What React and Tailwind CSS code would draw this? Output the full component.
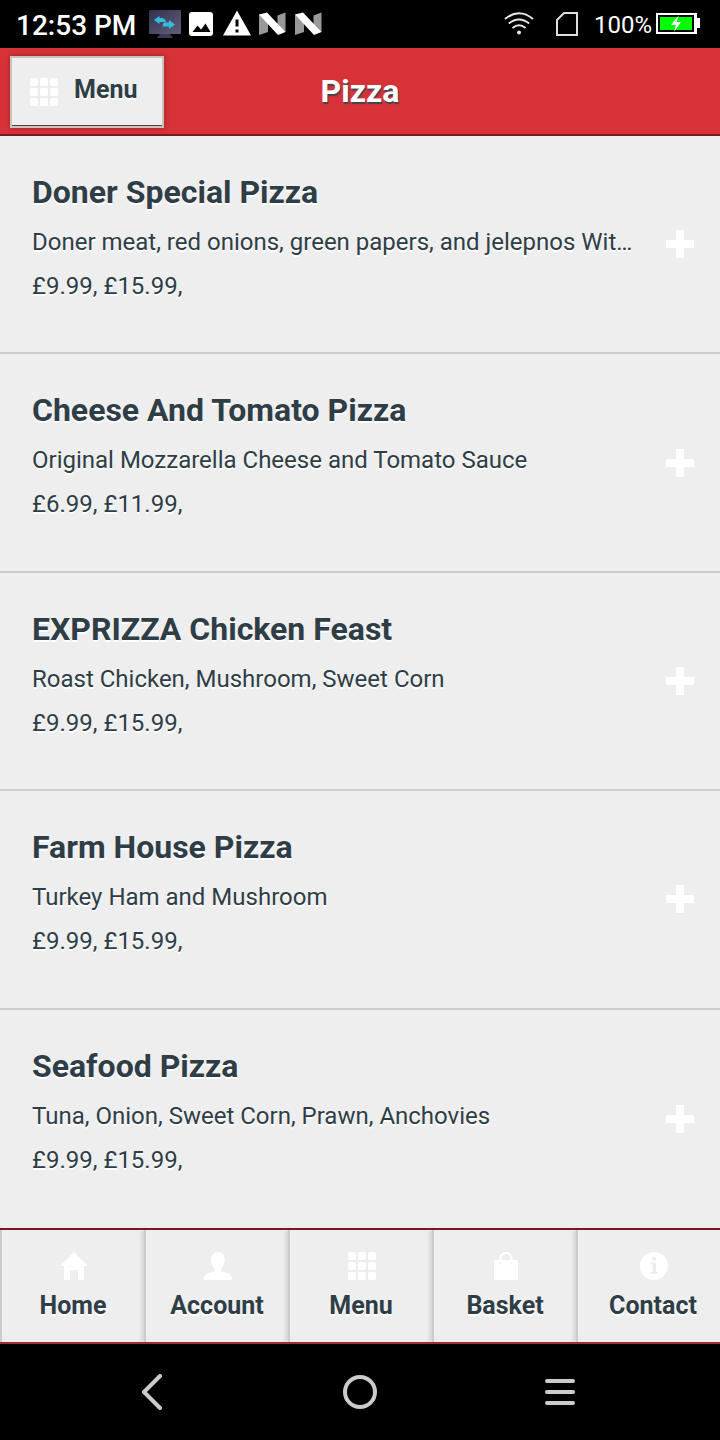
import React from "react";

const pizzas = [
  {
    name: "Doner Special Pizza",
    toppings: "Doner meat, red onions, green papers, and jelepnos With cheese",
    prices: "£9.99, £15.99,",
  },
  {
    name: "Cheese And Tomato Pizza",
    toppings: "Original Mozzarella Cheese and Tomato Sauce",
    prices: "£6.99, £11.99,",
  },
  {
    name: "EXPRIZZA Chicken Feast",
    toppings: "Roast Chicken, Mushroom, Sweet Corn",
    prices: "£9.99, £15.99,",
  },
  {
    name: "Farm House Pizza",
    toppings: "Turkey Ham and Mushroom",
    prices: "£9.99, £15.99,",
  },
  {
    name: "Seafood Pizza",
    toppings: "Tuna, Onion, Sweet Corn, Prawn, Anchovies",
    prices: "£9.99, £15.99,",
  },
];

function Icon({ children }) {
  return (
    <svg aria-hidden="true" viewBox="0 0 28 28" className="size-7 shrink-0 fill-white">
      {children}
    </svg>
  );
}

function GridIcon() {
  return (
    <Icon>
      {[0, 10, 20].map((y) =>
        [0, 10, 20].map((x) => (
          <rect key={`${x}-${y}`} x={x} y={y} width="8" height="8" rx="1.6" />
        ))
      )}
    </Icon>
  );
}

function HomeIcon() {
  return (
    <Icon>
      <path d="M14 0 28 14H24V28H18V18H10V28H4V14H0Z" />
    </Icon>
  );
}

function UserIcon() {
  return (
    <Icon>
      <path d="M14 0C18.200 0 20.800 3.200 20.800 8C20.800 12.200 19 15.500 17 17.200V19.500C21 20.500 28 21 28 26.500V28H0V26.500C0 21 7 20.500 11 19.500V17.200C9 15.500 7.200 12.200 7.200 8C7.200 3.200 9.800 0 14 0Z" />
    </Icon>
  );
}

function BagIcon() {
  return (
    <Icon>
      <path d="M8.500 9V6.500A5.500 5.500 0 0 1 19.500 6.500V9" fill="none" stroke="#fff" strokeWidth="2" />
      <path fillRule="evenodd" d="M2 8H26V28H2ZM8.500 10A1 1 0 1 0 8.500 12A1 1 0 1 0 8.500 10ZM19.500 10A1 1 0 1 0 19.500 12A1 1 0 1 0 19.500 10Z" />
    </Icon>
  );
}

function InfoIcon() {
  return (
    <Icon>
      <circle cx="14" cy="14" r="14" />
      <path fill="#eee" d="M12.200 5H16V8.400H12.200ZM10.500 10.500H16V20H18V22H10.500V20H12.500V12.500H10.500Z" />
    </Icon>
  );
}

function PlusIcon() {
  return (
    <Icon>
      <path d="M10 0H18V10H28V18H18V28H10V18H0V10H10Z" />
    </Icon>
  );
}

function NougatIcon() {
  return (
    <svg aria-hidden="true" viewBox="0 0 28 24" className="h-6 w-7">
      <path d="M0 2.500 9 9V20L0 23ZM18.500 3.500 26.500 0.500V20L18.500 16Z" fill="#999" />
      <path d="M0 2.500 8 0.500 26.500 20 19 23Z" fill="#fff" />
    </svg>
  );
}

function StatusBar() {
  return (
    <div className="flex h-12 items-center bg-black pl-4 pr-5 text-white">
      <span className="pt-1 text-[28px] leading-8 font-medium">12:53 PM</span>
      <div className="ml-[13px] flex items-center gap-2">
        <svg aria-hidden="true" viewBox="0 0 32 28" className="h-7 w-8">
          <defs>
            <linearGradient id="screen" x1="0" y1="0" x2="1" y2="1">
              <stop offset="0" stopColor="#31314d" />
              <stop offset="1" stopColor="#60607c" />
            </linearGradient>
          </defs>
          <rect width="32" height="24" rx="1" fill="url(#screen)" />
          <path d="M11 24H21L24 28H8Z" fill="#3b3b50" />
          <path
            d="M5 10 10.500 6V8H13Q16 8 17 12H14Q13 12 10.500 12V14Z M26 14.500 20 10V12.500H15Q14 13 13.500 16.500H17L20 16.500V19Z"
            fill="#35bde0"
          />
        </svg>
        <svg aria-hidden="true" viewBox="0 0 24 24" className="size-6">
          <rect width="24" height="24" rx="3" fill="#fff" />
          <path d="M3.500 20 8.500 13.500 12 17.500 16.500 11.500 21.500 20Z" fill="#000" />
        </svg>
        <svg aria-hidden="true" viewBox="0 0 32 28" className="h-7 w-8">
          <path d="M16 0.500 30 25.500H2Z" fill="#fff" />
          <path d="M14.500 9.500H17.500V16.500H14.500ZM14.500 19.500H17.500V22.500H14.500Z" fill="#000" />
        </svg>
        <div className="-ml-0.5 flex gap-2">
          <NougatIcon />
          <NougatIcon />
        </div>
      </div>
      <div className="ml-auto flex items-center">
        <svg aria-hidden="true" viewBox="0 0 30 24" className="h-6 w-[30px]" fill="none" stroke="#e6e6e6" strokeWidth="2">
          <path d="M1 7Q15-4.500 29 7M4.800 11.500Q15 3.500 25.200 11.500M8.500 16Q15 10.500 21.500 16" />
          <circle cx="15" cy="20.500" r="2" fill="#e6e6e6" stroke="none" />
        </svg>
        <svg aria-hidden="true" viewBox="0 0 22 24" className="ml-[22px] h-6 w-[22px]" fill="none" stroke="#ddd" strokeWidth="2">
          <path d="M1 23V8L8 1H21V23Z" />
        </svg>
        <span className="ml-4 pt-0.5 text-2xl">100%</span>
        <svg aria-hidden="true" viewBox="0 0 44 22" className="ml-1 h-[22px] w-11">
          <path fillRule="evenodd" d="M0 0H41V5H44V15H41V21H0ZM2 2V19H38V2Z" fill="#fff" />
          <rect x="4" y="4" width="32" height="13" fill="#0f0" />
          <path d="M23 2 15 12H20L18 19 25 9H20.500Z" fill="#fff" />
        </svg>
      </div>
    </div>
  );
}

function Header() {
  return (
    <header className="relative flex h-22 items-center justify-center border-b-2 border-[#791a23] bg-[#d63238]">
      <button
        type="button"
        className="absolute left-2.5 top-2 flex h-18 w-[154px] items-start gap-4 border-2 border-[#cbc3b9] bg-[#eee] pt-4 pl-[18px] text-[25px] font-bold text-[#2f3e46] shadow-[inset_0_-1px_0_#5b3b44,0_0_5px_#00000050]"
      >
        <span className="pt-1">
          <GridIcon />
        </span>
        <span className="leading-8 [text-shadow:0_2px_0_#fff]">Menu</span>
      </button>
      <h1 className="text-[32px] leading-10 font-bold text-white [text-shadow:1px_2px_1px_#444]">Pizza</h1>
    </header>
  );
}

function PizzaRow({ name, toppings, prices }) {
  return (
    <li className="flex border-b-2 border-[#ccc] last:border-b-0">
      <div className="min-w-0 flex-1 pt-9 pl-8 [text-shadow:0_2px_0_#fff]">
        <h2 className="text-[32px] leading-10 font-bold">{name}</h2>
        <div className="mt-2 text-2xl leading-11">
          <p className="truncate">{toppings}</p>
          <p>{prices}</p>
        </div>
      </div>
      <button type="button" aria-label={`Add ${name}`} className="flex w-20 shrink-0 items-center justify-end pr-[26px]">
        <PlusIcon />
      </button>
    </li>
  );
}

const tabs = [
  { label: "Home", icon: HomeIcon },
  { label: "Account", icon: UserIcon },
  { label: "Menu", icon: GridIcon },
  { label: "Basket", icon: BagIcon },
  { label: "Contact", icon: InfoIcon },
];

function TabBar() {
  return (
    <nav className="grid h-29 grid-cols-5 border-y-2 border-t-[#791a23] border-b-[#a92f3d]">
      {tabs.map(({ label, icon: TabIcon }) => (
        <a
          key={label}
          href={`#${label.toLowerCase()}`}
          className="flex flex-col items-center gap-2 border-l-2 border-[#ccc] pt-[22px] text-[25px] leading-9 font-bold shadow-[-2px_0_4px_#00000020] [text-shadow:0_2px_0_#fff] last:pl-2"
        >
          <span className="pl-0.5">
            <TabIcon />
          </span>
          {label}
        </a>
      ))}
    </nav>
  );
}

function SystemNav() {
  const buttonClass = "flex size-12 items-center justify-center";
  return (
    <div className="flex h-24 items-center justify-around bg-black px-15">
      <button type="button" aria-label="Back" className={buttonClass}>
        <svg viewBox="0 0 36 36" className="size-9" fill="none" stroke="#ccc" strokeWidth="4" strokeLinecap="round" strokeLinejoin="round">
          <path d="M18 2 2 18 18 34" />
        </svg>
      </button>
      <button type="button" aria-label="Home screen" className={buttonClass}>
        <svg viewBox="0 0 36 36" className="size-9" fill="none" stroke="#ccc" strokeWidth="4">
          <circle cx="18" cy="18" r="15" />
        </svg>
      </button>
      <button type="button" aria-label="Recent apps" className={buttonClass}>
        <svg viewBox="0 0 36 36" className="size-9" fill="none" stroke="#ccc" strokeWidth="4" strokeLinecap="round">
          <path d="M5 7H31M5 18H31M5 29H31" />
        </svg>
      </button>
    </div>
  );
}

export default function App() {
  return (
    <div className="flex min-h-screen flex-col bg-[#eee] font-[Roboto,sans-serif] text-[#2f3e46]">
      <StatusBar />
      <Header />
      <main className="flex flex-1 flex-col">
        <ul className="grid flex-1 auto-rows-fr grid-cols-1">
          {pizzas.map((pizza) => (
            <PizzaRow key={pizza.name} {...pizza} />
          ))}
        </ul>
      </main>
      <TabBar />
      <SystemNav />
    </div>
  );
}
